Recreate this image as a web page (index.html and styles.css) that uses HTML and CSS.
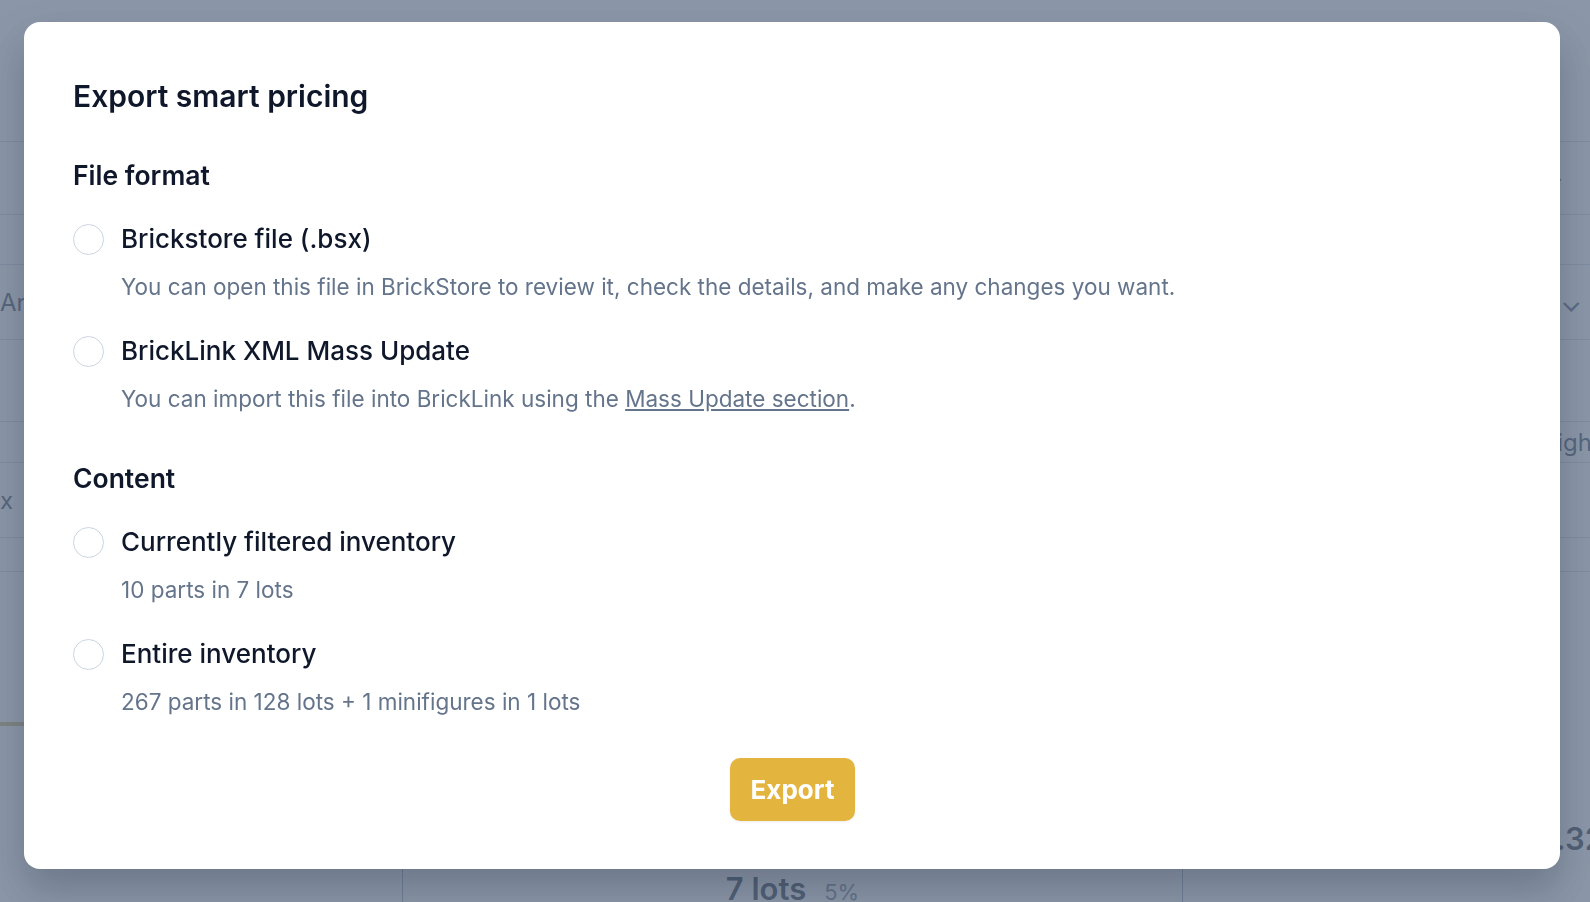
FILE: index.html
```html
<!DOCTYPE html>
<html lang="en">
<head>
    <meta charset="UTF-8">
    <meta name="viewport" content="width=device-width, initial-scale=1.0">
    <title>Export smart pricing</title>
    <link rel="stylesheet" href="styles.css">
</head>
<body>
    <!-- page behind the dialog, mostly hidden -->
    <div class="page">
        <div class="row" style="height: 142px"></div>
        <div class="row" style="height: 73px"><span class="chevron chevron-top">&#8964;</span></div>
        <div class="row" style="height: 50px"></div>
        <div class="row" style="height: 75px"><span class="select-text">Any</span><span class="chevron">&#8964;</span></div>
        <div class="row" style="height: 82px"></div>
        <div class="row" style="height: 41px"><span class="cell-text right">High</span></div>
        <div class="row" style="height: 75px"><span class="cell-text">x</span></div>
        <div class="row" style="height: 34px"></div>
        <div class="progress"></div>
        <div class="stats">
            <div class="stat"></div>
            <div class="stat center"><span class="big">7 lots</span><span class="pct">5%</span></div>
            <div class="stat top"><span class="big right-num">$1.32</span></div>
        </div>
    </div>

    <div class="overlay">
        <div class="modal">
            <h2 class="modal-title">Export smart pricing</h2>

            <div class="group">
                <h3 class="group-title">File format</h3>
                <label class="option">
                    <input type="radio" name="format" class="radio">
                    <span class="option-name">Brickstore file (.bsx)</span>
                    <span class="option-desc">You can open this file in BrickStore to review it, check the details, and make any changes you want.</span>
                </label>
                <label class="option">
                    <input type="radio" name="format" class="radio">
                    <span class="option-name">BrickLink XML Mass Update</span>
                    <span class="option-desc">You can import this file into BrickLink using the <a href="#">Mass Update section</a>.</span>
                </label>
            </div>

            <div class="group">
                <h3 class="group-title">Content</h3>
                <label class="option">
                    <input type="radio" name="content" class="radio">
                    <span class="option-name">Currently filtered inventory</span>
                    <span class="option-desc">10 parts in 7 lots</span>
                </label>
                <label class="option">
                    <input type="radio" name="content" class="radio">
                    <span class="option-name">Entire inventory</span>
                    <span class="option-desc">267 parts in 128 lots + 1 minifigures in 1 lots</span>
                </label>
            </div>

            <div class="actions">
                <button class="export-button">Export</button>
            </div>
        </div>
    </div>
</body>
</html>
```

FILE: styles.css
```css
body {
    margin: 0;
    font-family: Inter, "Noto Sans", sans-serif;
    background-color: #ffffff;
    color: #0f172a;
    height: 902px;
    overflow: hidden;
}

/* background page */
.page {
    display: flex;
    flex-direction: column;
}
.row {
    border-bottom: 1px solid #cbd5e1;
    display: flex;
    align-items: center;
    justify-content: space-between;
    box-sizing: border-box;
}
.select-text, .cell-text {
    font-size: 24px;
    color: #334155;
}
.cell-text.right {
    margin-left: auto;
    margin-right: -2px;
}
.chevron {
    margin-left: auto;
    margin-right: 8px;
    font-size: 28px;
    color: #475569;
}
.chevron-top {
    margin-right: 26px;
}
.progress {
    height: 4px;
    background-color: #c9b26b;
    margin-top: 150px;
    width: 60%;
}
.stats {
    display: grid;
    grid-template-columns: 402px 780px 1fr;
    margin-top: 90px;
    height: 90px;
}
.stat {
    border-left: 1px solid #94a3b8;
    display: flex;
    align-items: flex-end;
    justify-content: flex-end;
}
.stat:first-child {
    border-left: none;
}
.stat.center {
    justify-content: center;
    align-items: baseline;
    gap: 18px;
    padding-top: 54px;
}
.stat.top {
    align-items: flex-start;
    padding-top: 4px;
}
.big {
    font-size: 31px;
    font-weight: 600;
    color: #1e293b;
}
.right-num {
    margin-right: -14px;
}
.pct {
    font-size: 22px;
    color: #64748b;
}

/* dialog */
.overlay {
    position: fixed;
    inset: 0;
    background-color: rgba(100, 116, 139, 0.75);
    padding: 22px 30px 0 24px;
}
.modal {
    background-color: #ffffff;
    border-radius: 16px;
    padding: 54px 48px 48px 49px;
    box-shadow: 0 20px 40px rgba(15, 23, 42, 0.25);
}
.modal-title {
    margin: 0 0 42px;
    font-size: 30px;
    line-height: 40px;
    font-weight: 600;
    color: #0f172a;
}
.group + .group {
    margin-top: 46px;
}
.group-title {
    margin: 0 0 29px;
    font-size: 26.5px;
    line-height: 34px;
    font-weight: 600;
    color: #0f172a;
}
.option {
    display: grid;
    grid-template-columns: 31px 1fr;
    column-gap: 17px;
    cursor: pointer;
}
.option + .option {
    margin-top: 30px;
}
.radio {
    appearance: none;
    margin: 0;
    width: 31px;
    height: 31px;
    border: 1.5px solid #cbd5e1;
    border-radius: 50%;
    align-self: center;
    box-sizing: border-box;
}
.option-name {
    font-size: 26px;
    line-height: 36px;
    font-weight: 500;
    color: #0f172a;
}
.option-desc {
    grid-column: 2;
    margin-top: 14px;
    font-size: 22.5px;
    line-height: 32px;
    color: #64748b;
}
.option-desc a {
    color: #64748b;
}
.actions {
    display: flex;
    justify-content: center;
    margin-top: 40px;
}
.export-button {
    width: 125px;
    height: 63px;
    border: none;
    border-radius: 10px;
    background-color: #e3b53f;
    color: #ffffff;
    font-family: inherit;
    font-size: 26px;
    font-weight: 700;
    cursor: pointer;
    box-shadow: 0 1px 3px rgba(0, 0, 0, 0.08);
}
```
